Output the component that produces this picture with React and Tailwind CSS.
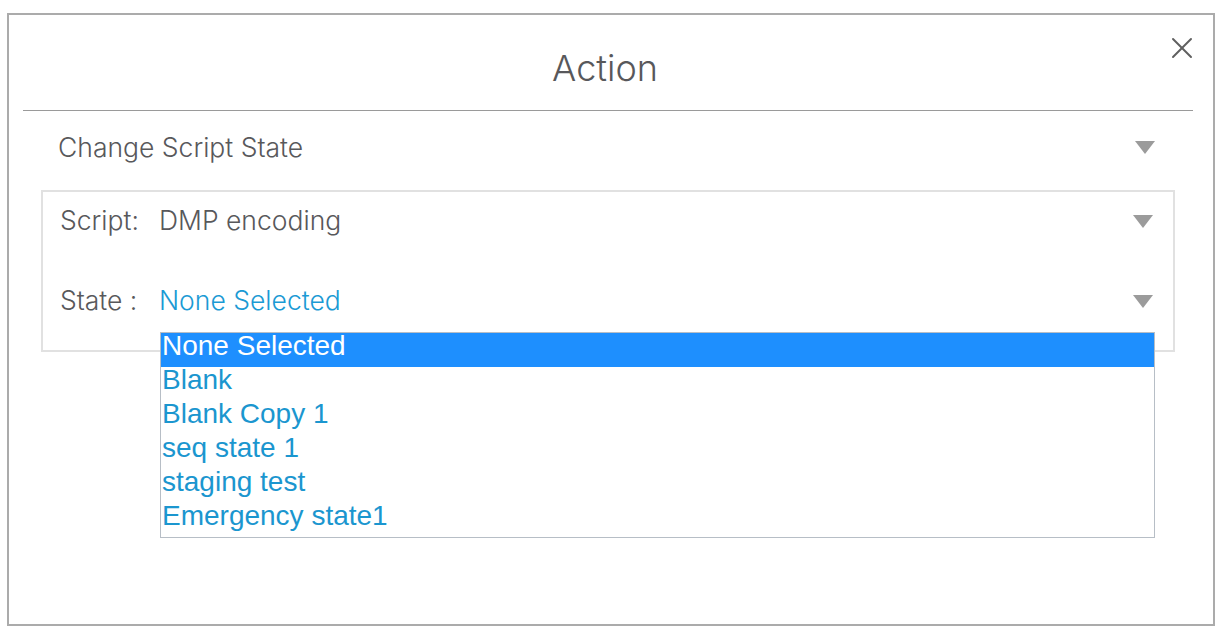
import { X } from "lucide-react";

const states = [
  "None Selected",
  "Blank",
  "Blank Copy 1",
  "seq state 1",
  "staging test",
  "Emergency state1",
];

function Caret() {
  return (
    <svg width="20" height="13" viewBox="0 0 20 13" className="shrink-0">
      <polygon points="0,0 20,0 10,13" fill="#9b9b9b" />
    </svg>
  );
}

export default function App() {
  return (
    <div
      className="w-full h-[638px] bg-white pt-[13px] pl-[7px]"
      style={{ fontFamily: 'Inter, "Liberation Sans", sans-serif' }}
    >
      <div className="w-[1208px] h-[613px] border-2 border-[#ababab] bg-white flex flex-col">
        <div className="relative h-[95px] pt-[10px] pr-[12px] flex items-center justify-center">
          <h1 className="text-[36px] font-light text-[#58585b] leading-none">Action</h1>
          <button className="absolute right-[13px] top-[15px] text-[#5f5f5f]">
            <X size={36} strokeWidth={1.3} />
          </button>
        </div>
        <div className="ml-[14px] mr-[20px] h-px bg-[#9a9a9a]" />

        <div className="h-[79px] pl-[49px] pr-[58px] pb-[6px] flex items-center justify-between">
          <span className="text-[26.5px] font-light text-[#58585b]">Change Script State</span>
          <Caret />
        </div>

        <div className="relative ml-[32px] mr-[38px] h-[162px] border-2 border-[#e1e1e1] pl-[17px] pr-[20px] pt-[9px]">
          <div className="h-[40px] flex items-center justify-between">
            <div className="flex items-center text-[26.5px] font-light text-[#58585b]">
              <span className="w-[99px]">Script:</span>
              <span>DMP encoding</span>
            </div>
            <Caret />
          </div>
          <div className="h-[40px] mt-[40px] flex items-center justify-between">
            <div className="flex items-center text-[26.5px] font-light">
              <span className="w-[99px] text-[#58585b]">State :</span>
              <span className="text-[#1b9ad4]">None Selected</span>
            </div>
            <Caret />
          </div>

          <ul
            className="absolute left-[117px] top-[140px] w-[995px] border border-[#b7bec6] bg-white z-10"
            style={{ fontFamily: '"Liberation Sans", Arial, sans-serif' }}
          >
            {states.map((s, i) => (
              <li
                key={s}
                className={
                  i === 0
                    ? "h-[34px] pl-[1px] leading-[26px] text-[28px] bg-[#1e8ffe] text-white"
                    : "h-[34px] pl-[1px] leading-[26px] text-[28px] text-[#1b96cf]"
                }
              >
                {s}
              </li>
            ))}
          </ul>
        </div>
      </div>
    </div>
  );
}
